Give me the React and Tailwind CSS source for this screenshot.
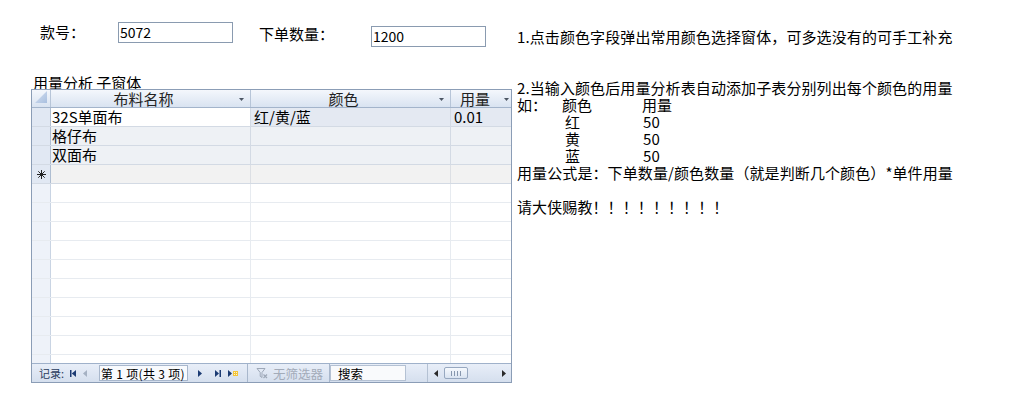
const FONT = "font-['Noto_Sans_CJK_SC','Noto_Sans',sans-serif]"

const rows = [
  { id: 1, name: '32S单面布', color: '红/黄/蓝', qty: '0.01', current: true },
  { id: 2, name: '格仔布' },
  { id: 3, name: '双面布' },
]

const emptyRows = Array.from({ length: 10 }, (_, i) => i)

function HeaderArrow({ right = 'right-[6px]' }) {
  return (
    <svg width="5" height="3" viewBox="0 0 5 3" className={`absolute top-[8px] ${right}`}>
      <polygon points="0,0 5,0 2.5,3" fill="#4b5563" />
    </svg>
  )
}

function Star() {
  return (
    <svg width="9" height="9" viewBox="0 0 9 9">
      <g stroke="#222" strokeWidth="1">
        <line x1="4.5" y1="0" x2="4.5" y2="9" />
        <line x1="0" y1="4.5" x2="9" y2="4.5" />
        <line x1="1.3" y1="1.3" x2="7.7" y2="7.7" />
        <line x1="7.7" y1="1.3" x2="1.3" y2="7.7" />
      </g>
    </svg>
  )
}

function Grid() {
  return (
    <div className="flex h-[294px] w-[481px] flex-col border border-[#8b9db6] bg-white">
      {/* header */}
      <div className="grid h-[18px] shrink-0 grid-cols-[19px_200px_200px_60px] border-b border-[#a3b4cb] bg-gradient-to-b from-[#f4f7fc] to-[#d9e3f1] text-[15px] leading-[17px] text-[#222]">
        <div className="flex items-start justify-end border-r border-[#b7c5d8] pr-[3px] pt-[1px]">
          <svg width="12" height="12" viewBox="0 0 12 12">
            <defs>
              <linearGradient id="tri" x1="0" y1="0" x2="1" y2="1">
                <stop offset="0" stopColor="#d5e1f2" />
                <stop offset="1" stopColor="#a9bfdf" />
              </linearGradient>
            </defs>
            <polygon points="12,0 12,12 0,12" fill="url(#tri)" />
          </svg>
        </div>
        <div className="relative flex justify-center border-r border-[#b7c5d8] pr-[14px]">
          布料名称
          <HeaderArrow />
        </div>
        <div className="relative flex justify-center border-r border-[#b7c5d8] pr-[14px]">
          颜色
          <HeaderArrow />
        </div>
        <div className="relative flex justify-center pr-[12px]">
          用量
          <HeaderArrow right="right-[2px]" />
        </div>
      </div>

      {/* body */}
      <div className="flex-1 overflow-hidden text-[15px] leading-[18px] text-black">
        {rows.map((r) => (
          <div
            key={r.id}
            className="grid h-[19px] grid-cols-[19px_200px_200px_60px] border-b border-[#d3dae4]"
          >
            <div className="border-r border-[#aebdd1] bg-[#e1e8f3]" />
            <div className={`border-r border-[#d3dae4] pl-[1px] ${r.current ? 'bg-white' : 'bg-[#eef1f5]'}`}>
              {r.name}
            </div>
            <div className={`border-r border-[#d3dae4] pl-[3px] ${r.current ? 'bg-[#e4e9f2]' : 'bg-[#eef1f5]'}`}>
              {r.color}
            </div>
            <div className={`pl-[3px] ${r.current ? 'bg-[#e4e9f2]' : 'bg-[#eef1f5]'}`}>{r.qty}</div>
          </div>
        ))}
        <div className="grid h-[19px] grid-cols-[19px_200px_200px_60px] border-b border-[#d3dae4] bg-[#f2f2f2]">
          <div className="flex items-center justify-center border-r border-[#aebdd1] bg-[#e1e8f3]">
            <Star />
          </div>
          <div className="border-r border-[#dcdfe4]" />
          <div className="border-r border-[#dcdfe4]" />
          <div />
        </div>
        {emptyRows.map((i) => (
          <div key={i} className="grid h-[19px] grid-cols-[19px_200px_200px_60px] border-b border-[#e7ebf0]">
            <div className="border-r border-[#c9d4e3] bg-[#eef2f9]" />
            <div className="border-r border-[#e7ebf0]" />
            <div className="border-r border-[#e7ebf0]" />
            <div />
          </div>
        ))}
      </div>

      {/* navigation bar */}
      <div className="flex h-[19px] shrink-0 items-center border-t border-[#9fb1ca] bg-gradient-to-b from-[#e8eef8] to-[#d5dfee] text-[12.5px] leading-[15px]">
        <div className="w-[36px] pl-[7px] text-[11px] text-[#2b3d5e]">记录:</div>
        <div className="flex w-[10px] justify-center">
          <svg width="6" height="7" viewBox="0 0 6 7">
            <rect x="0" y="0" width="1.5" height="7" fill="#1c3b73" />
            <polygon points="6,0 6,7 1.8,3.5" fill="#1c3b73" />
          </svg>
        </div>
        <div className="flex w-[14px] justify-center">
          <svg width="4" height="7" viewBox="0 0 4 7">
            <polygon points="4,0 4,7 0,3.5" fill="#a5b1c3" />
          </svg>
        </div>
        <div className="ml-[7px] h-[16px] w-[89px] border border-[#a8b7cc] bg-[#f8fafd] pl-[1px] text-[12px] tracking-[0.3px] text-black">
          第 1 项(共 3 项)
        </div>
        <div className="flex w-[24px] justify-center">
          <svg width="4" height="7" viewBox="0 0 4 7">
            <polygon points="0,0 0,7 4,3.5" fill="#1c3b73" />
          </svg>
        </div>
        <div className="flex w-[12px] justify-center">
          <svg width="6" height="7" viewBox="0 0 6 7">
            <polygon points="0,0 0,7 4,3.5" fill="#1c3b73" />
            <rect x="4.5" y="0" width="1.5" height="7" fill="#1c3b73" />
          </svg>
        </div>
        <div className="flex w-[18px] justify-center">
          <svg width="10" height="7" viewBox="0 0 10 7">
            <polygon points="0,0 0,7 4,3.5" fill="#1c3b73" />
            <rect x="5" y="1" width="5" height="5" fill="#f3c43a" />
            <rect x="6" y="2" width="1" height="1" fill="#fff6cf" />
            <rect x="8" y="2" width="1" height="1" fill="#fff6cf" />
            <rect x="6" y="4" width="1" height="1" fill="#fff6cf" />
            <rect x="8" y="4" width="1" height="1" fill="#fff6cf" />
          </svg>
        </div>
        <div className="ml-[5px] h-full w-px bg-[#a8b7cc]" />
        <div className="flex w-[81px] items-center pl-[8px] text-[#a3abb9]">
          <svg width="12" height="12" viewBox="0 0 12 12" className="mr-[5px]">
            <path d="M1 1.5 H9 L6 5.5 V10.5 L4.2 9.3 V5.5 Z" fill="none" stroke="#9ea8b8" strokeWidth="1" />
            <path d="M7.5 7.5 L11 11 M11 7.5 L7.5 11" stroke="#9ea8b8" strokeWidth="1.2" />
          </svg>
          无筛选器
        </div>
        <div className="h-full w-px bg-[#a8b7cc]" />
        <div className="w-[97px]">
          <div className="h-[16px] w-[76px] border border-[#b4c1d3] bg-[#f9fafc] pl-[7px] text-black">搜索</div>
        </div>
        <div className="h-full w-px bg-[#b4c1d3]" />
        <div className="flex flex-1 items-center">
          <div className="flex w-[16px] justify-center">
            <svg width="4" height="7" viewBox="0 0 4 7">
              <polygon points="4,0 4,7 0,3.5" fill="#2a2a2a" />
            </svg>
          </div>
          <div className="flex h-[12px] w-[24px] items-center justify-center gap-[2px] rounded-[2px] border border-[#97a8c0] bg-gradient-to-b from-[#f6f9fd] to-[#d9e3f1]">
            <span className="h-[5px] w-px bg-[#8797ae]" />
            <span className="h-[5px] w-px bg-[#8797ae]" />
            <span className="h-[5px] w-px bg-[#8797ae]" />
            <span className="h-[5px] w-px bg-[#8797ae]" />
          </div>
          <div className="flex-1" />
          <div className="flex w-[14px] justify-center">
            <svg width="4" height="7" viewBox="0 0 4 7">
              <polygon points="0,0 0,7 4,3.5" fill="#2a2a2a" />
            </svg>
          </div>
        </div>
      </div>
    </div>
  )
}

export default function App() {
  return (
    <div className={`flex h-[398px] w-[1033px] bg-white pl-[31px] pt-[22px] text-black ${FONT}`}>
      <div className="flex w-[481px] flex-col">
        <div className="flex h-[25px] items-start text-[15px]">
          <div className="ml-[9px] w-[78px] leading-[19px]">款号：</div>
          <div className="h-[21px] w-[115px] border border-[#8a9bb0] bg-white pl-[1px] text-[14px] leading-[19px]">
            5072
          </div>
          <div className="ml-[26px] mt-[2px] w-[112px] leading-[19px]">下单数量：</div>
          <div className="mt-[4px] h-[21px] w-[115px] border border-[#8a9bb0] bg-white pl-[1px] text-[14px] leading-[19px]">
            1200
          </div>
        </div>
        <div className="mt-[27px] h-[15px] overflow-hidden pl-[2px] text-[15px] leading-[17px]">用量分析 子窗体</div>
        <Grid />
      </div>

      <div className="ml-[5px] pt-[6px] text-[15px] leading-[17px] tracking-[0.1px]">
        <div>1.点击颜色字段弹出常用颜色选择窗体，可多选没有的可手工补充</div>
        <div className="h-[34px]" />
        <div>2.当输入颜色后用量分析表自动添加子表分别列出每个颜色的用量</div>
        <div className="flex">
          <span className="w-[45px]">如：</span>
          <span className="w-[80px]">颜色</span>
          <span>用量</span>
        </div>
        {['红', '黄', '蓝'].map((c) => (
          <div key={c} className="flex">
            <span className="w-[48px]" />
            <span className="w-[78px]">{c}</span>
            <span>50</span>
          </div>
        ))}
        <div>用量公式是：下单数量/颜色数量（就是判断几个颜色）*单件用量</div>
        <div className="h-[17px]" />
        <div>请大侠赐教！！！！！！！！！</div>
      </div>
    </div>
  )
}
